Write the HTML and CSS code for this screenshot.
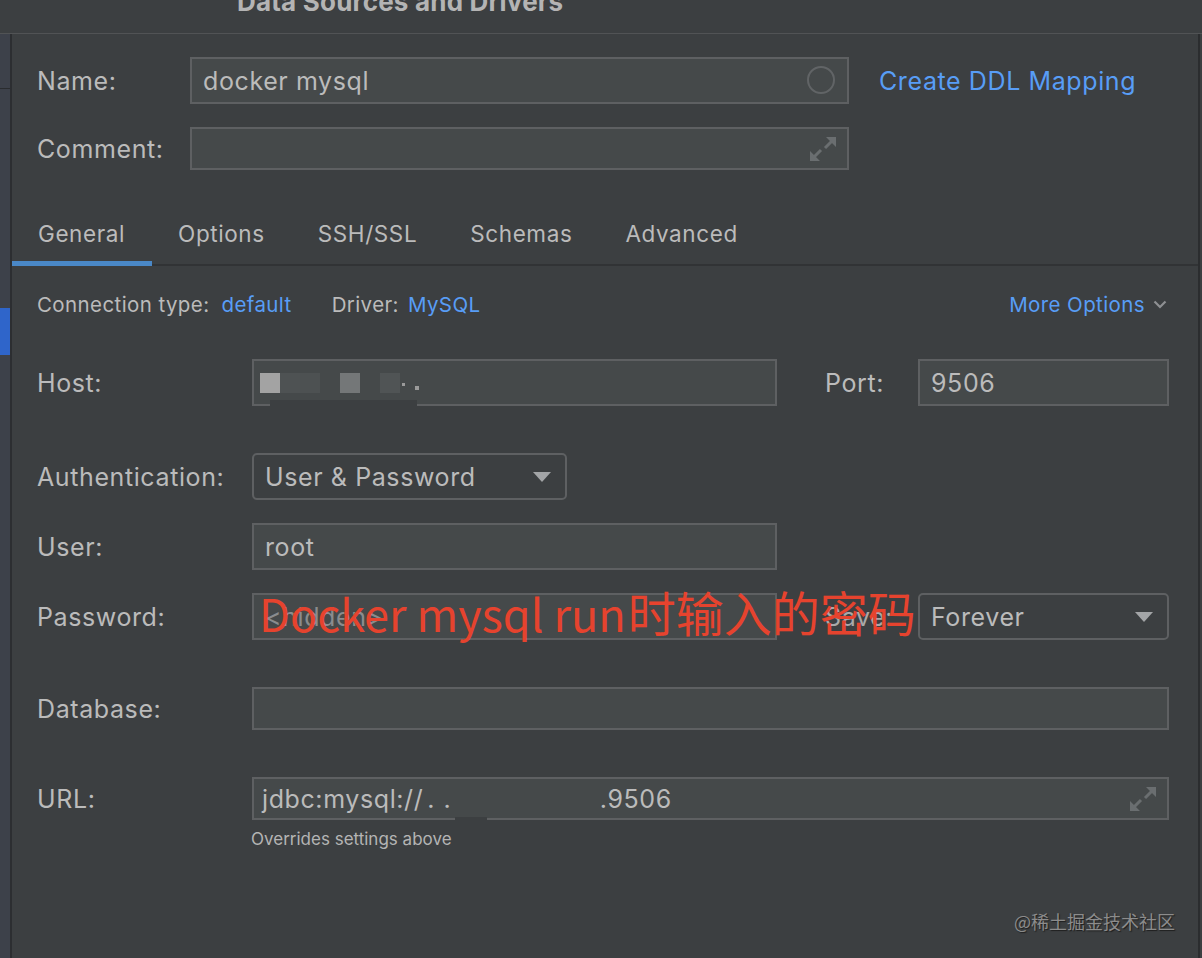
FILE: index.html
```html
<!DOCTYPE html>
<html>
<head>
<meta charset="utf-8">
<link rel="stylesheet" href="styles.css">
</head>
<body>
<div class="header"><div class="title">Data Sources and Drivers</div></div>
<div class="main">
  <div class="strip">
    <div class="strip-gap1"></div>
    <div class="strip-line"></div>
    <div class="strip-gap2"></div>
    <div class="strip-sel"></div>
  </div>
  <div class="content">
    <div class="top">
      <div class="trow name-row">
        <div class="tlabel">Name:</div>
        <div class="field tfield"><span class="val">docker mysql</span>
          <svg class="circle" width="30" height="30" viewBox="0 0 30 30"><circle cx="15" cy="15" r="13" fill="none" stroke="#616466" stroke-width="2"/></svg>
        </div>
        <a class="link ddl">Create DDL Mapping</a>
      </div>
      <div class="trow comment-row">
        <div class="tlabel">Comment:</div>
        <div class="field tfield short">
          <svg class="expand" width="26" height="24" viewBox="0 0 26 24"><path d="M16 0h10v10z M0 14v10h10z" fill="#6a6e70"/><path d="M22 4l-7 7 M4 20l7-7" stroke="#6a6e70" stroke-width="3"/></svg>
        </div>
      </div>
    </div>
    <div class="tabs">
      <div class="tab active">General</div>
      <div class="tab">Options</div>
      <div class="tab">SSH/SSL</div>
      <div class="tab">Schemas</div>
      <div class="tab">Advanced</div>
    </div>
    <div class="body">
      <div class="conn-row">
        <span class="clabel">Connection type:</span>
        <a class="link small ctype">default</a>
        <span class="clabel driver">Driver:</span>
        <a class="link small dval">MySQL</a>
        <a class="link small more">More Options</a>
        <svg class="chev" width="14" height="9" viewBox="0 0 14 9"><path d="M1.5 1.5l5.5 5.5 5.5-5.5" fill="none" stroke="#8e9092" stroke-width="2.2"/></svg>
      </div>
      <div class="row host-row">
        <div class="lbl">Host:</div>
        <div class="field wmain host">
          <div class="blur">
            <span class="sq sq1"></span><span class="sq sq2"></span><span class="sq sq3"></span><span class="sq sq0"></span><span class="sq sq4"></span><span class="sq sq0"></span><span class="sq sq5"></span><span class="dot d1"></span><span class="dot d2"></span>
          </div>
          <div class="erase"></div>
        </div>
        <div class="side-lbl">Port:</div>
        <div class="field wside"><span class="val">9506</span></div>
      </div>
      <div class="row auth-row">
        <div class="lbl">Authentication:</div>
        <div class="combo wauth"><span class="val">User &amp; Password</span>
          <svg class="tri" width="18" height="10" viewBox="0 0 18 10"><path d="M0 0h18l-9 10z" fill="#a3a5a7"/></svg>
        </div>
      </div>
      <div class="row user-row">
        <div class="lbl">User:</div>
        <div class="field wmain"><span class="val">root</span></div>
      </div>
      <div class="row pass-row">
        <div class="lbl">Password:</div>
        <div class="field wmain"><span class="val hidden">&lt;hidden&gt;</span></div>
        <div class="side-lbl save">Save:</div>
        <div class="combo wside"><span class="val">Forever</span>
          <svg class="tri" width="18" height="10" viewBox="0 0 18 10"><path d="M0 0h18l-9 10z" fill="#a3a5a7"/></svg>
        </div>
        <div class="note"><span class="note-latin">Docker mysql run</span><span class="note-cjk">时输入的密码</span></div>
      </div>
      <div class="row db-row">
        <div class="lbl">Database:</div>
        <div class="field wfull short"></div>
      </div>
      <div class="row url-row">
        <div class="lbl">URL:</div>
        <div class="field wfull short url"><span class="val">jdbc:mysql://<span class="dots">. .</span><span class="gap"></span>.9506</span>
          <div class="url-erase"></div>
          <svg class="expand" width="26" height="24" viewBox="0 0 26 24"><path d="M16 0h10v10z M0 14v10h10z" fill="#6a6e70"/><path d="M22 4l-7 7 M4 20l7-7" stroke="#6a6e70" stroke-width="3"/></svg>
        </div>
      </div>
      <div class="hint">Overrides settings above</div>
    </div>
  </div>
  <div class="rightline"></div>
</div>
<div class="watermark">@稀土掘金技术社区</div>
</body>
</html>
```
FILE: styles.css
```css
* { box-sizing: border-box; }
html, body { margin: 0; padding: 0; }
body {
  width: 1202px;
  height: 958px;
  overflow: hidden;
  background: #3c3f41;
  font-family: "Inter", "Liberation Sans", "Noto Sans CJK SC", sans-serif;
  color: #bbbbbb;
  position: relative;
}
.header {
  height: 34px;
  border-bottom: 1px solid #515355;
  overflow: hidden;
}
.title {
  margin-left: 237px;
  margin-top: -11px;
  font-size: 26px;
  line-height: 26px;
  letter-spacing: 0.2px;
  font-weight: 700;
  color: #b4b4b4;
  white-space: nowrap;
}
.main {
  display: flex;
  height: 924px;
}
.strip {
  width: 12px;
  background: #3d414a;
  border-right: 2px solid #2c2e31;
  display: flex;
  flex-direction: column;
}
.strip-gap1 { height: 54px; }
.strip-line { height: 1px; background: #2a2c2f; }
.strip-gap2 { height: 219px; }
.strip-sel { height: 47px; background: #2f65ca; }
.content {
  flex: 1;
  display: flex;
  flex-direction: column;
}
.rightline {
  width: 2px;
  margin-right: 2px;
  background: #2b2d2f;
}
.top { padding-left: 25px; }
.trow { display: flex; align-items: center; }
.name-row { margin-top: 23px; }
.comment-row { margin-top: 23px; }
.tlabel { width: 153px; font-size: 25px; letter-spacing: 0.6px; white-space: nowrap; }
.field {
  position: relative;
  height: 47px;
  background: #45494a;
  border: 2px solid #5e6062;
  display: flex;
  align-items: center;
  padding-left: 11px;
  font-size: 25px;
  letter-spacing: 0.6px;
}
.field.short { height: 43px; }
.tfield { width: 659px; }
.val { white-space: nowrap; }
.circle { position: absolute; right: 11px; top: 6px; }
.expand { position: absolute; right: 11px; top: 8px; }
.link { color: #589df6; text-decoration: none; white-space: nowrap; }
.ddl { margin-left: 30px; font-size: 25px; letter-spacing: 0.6px; }
.tabs {
  margin-top: 30px;
  display: flex;
  box-shadow: inset 0 -2px 0 #313335;
}
.tab {
  height: 66px;
  padding: 0 26.5px;
  display: flex;
  align-items: center;
  font-size: 22.5px;
  letter-spacing: 0.6px;
  white-space: nowrap;
}
.tab.active { padding-left: 26px; box-shadow: inset 0 -5px 0 #4a88c7; }
.body {
  padding-left: 25px;
  padding-right: 29px;
  display: flex;
  flex-direction: column;
}
.conn-row {
  margin-top: 26px;
  height: 24px;
  display: flex;
  align-items: center;
  font-size: 20.5px;
  letter-spacing: 0.4px;
  white-space: nowrap;
}
.ctype { margin-left: 12px; }
.driver { margin-left: 40px; }
.dval { margin-left: 9px; }
.more { margin-left: auto; }
.chev { margin-left: 8px; margin-right: 2px; }
.row { display: flex; align-items: center; position: relative; }
.lbl { width: 215px; font-size: 25px; letter-spacing: 0.6px; white-space: nowrap; }
.wmain { width: 525px; }
.wside { width: 251px; }
.wauth { width: 315px; }
.wfull { width: 917px; }
.side-lbl { width: 93px; margin-left: 48px; font-size: 25px; letter-spacing: 0.6px; }
.host-row { margin-top: 43px; }
.auth-row { margin-top: 47px; }
.user-row { margin-top: 23px; }
.pass-row { margin-top: 23px; }
.db-row { margin-top: 47px; }
.url-row { margin-top: 47px; }
.combo {
  position: relative;
  height: 47px;
  border: 2px solid #5e6062;
  border-radius: 5px;
  display: flex;
  align-items: center;
  padding-left: 11px;
  font-size: 25px;
  letter-spacing: 0.6px;
}
.tri { position: absolute; right: 14px; top: 17px; }
.hidden { color: #8a8c8e; }
.save { color: #a9a9a9; }
.note {
  position: absolute;
  left: 222px;
  top: 50%;
  transform: translateY(-63%);
  font-family: "Noto Sans CJK SC", sans-serif;
  line-height: 1;
  color: #e6432e;
  white-space: nowrap;
  display: flex;
  align-items: baseline;
}
.note-latin { font-size: 45px; }
.note-cjk { font-size: 48px; margin-left: 2px; }
.blur { display: flex; align-items: center; margin-left: -5px; margin-top: 0; }
.sq { width: 20px; height: 20px; display: block; }
.sq0 { background: transparent; }
.sq1 { background: #a3a3a3; }
.sq2 { background: #4e5253; }
.sq3 { background: #4d5152; }
.sq4 { background: #747778; }
.sq5 { background: #505455; }
.dot { width: 3px; height: 3px; background: #9a9a9a; display: block; }
.d1 { margin-left: 2px; margin-top: 4px; }
.d2 { margin-left: 10px; margin-top: 10px; width: 4px; height: 4px; }
.erase {
  position: absolute;
  left: 16px;
  bottom: -6px;
  width: 147px;
  height: 10px;
  background: #3c3f41;
}
.url { padding-left: 8px; }
.dots { margin-left: 4px; letter-spacing: 1px; }
.gap { display: inline-block; width: 148px; }
.url-erase {
  position: absolute;
  left: 201px;
  bottom: -3px;
  width: 32px;
  height: 4px;
  background: #3c3f41;
}
.hint {
  margin-top: 9px;
  margin-left: 214px;
  font-size: 17px;
  line-height: 20px;
  color: #b4b4b4;
}
.watermark {
  position: absolute;
  right: 27px;
  top: 910px;
  font-size: 18px;
  line-height: 22px;
  color: #8c8c8c;
  text-shadow: 1px 1px 1px #1e1e1e;
  font-family: "Noto Sans CJK SC", sans-serif;
}
```
